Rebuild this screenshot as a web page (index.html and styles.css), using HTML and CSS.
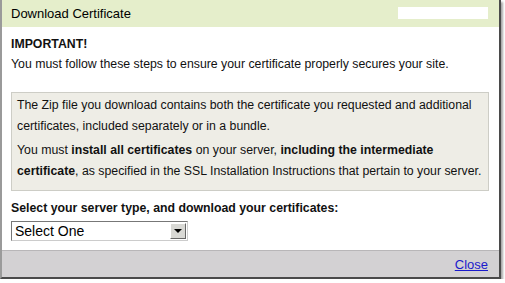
FILE: index.html
```html
<!DOCTYPE html>
<html lang="en">

    <head>
        <meta charset="UTF-8">
        <meta name="viewport" content="width=device-width, initial-scale=1.0">
        <title>Download Certificate</title>
        <link rel="stylesheet" href="styles.css">
    </head>

    <body>
        <div class="dialog">
            <div class="dialog-header">
                <span class="dialog-title">Download Certificate</span>
                <span class="header-field"></span>
            </div>
            <div class="dialog-body">
                <h3 class="important">IMPORTANT!</h3>
                <p class="intro">You must follow these steps to ensure your certificate properly secures your site.</p>
                <div class="note">
                    <p>The Zip file you download contains both the certificate you requested and additional certificates, included separately or in a bundle.</p>
                    <p>You must <b>install all certificates</b> on your server, <b>including the intermediate</b>
                        <b>certificate</b>, as specified in the SSL Installation Instructions that pertain to your server.</p>
                </div>
                <label class="server-label" for="serverType">Select your server type, and download your certificates:</label>
                <div class="select-box">
                    <select id="serverType" name="serverType">
                        <option>Select One</option>
                    </select>
                    <span class="select-arrow"></span>
                </div>
            </div>
            <div class="dialog-footer">
                <a href="#" class="close-link">Close</a>
            </div>
        </div>
    </body>

</html>
```

FILE: styles.css
```css
body {
    font-family: "Liberation Sans", Arial, sans-serif;
    font-size: 12.3px;
    color: #111;
    background-color: #fff;
    margin: 0;
}

.dialog {
    width: 497px;
    height: 277px;
    display: flex;
    flex-direction: column;
    border-left: 2px solid #9a9a9a;
    border-right: 2px solid #4a4a4a;
    border-bottom: 2px solid #4a4a4a;
    box-shadow: 2px 2px 2px rgba(0, 0, 0, 0.35);
}

.dialog-header {
    height: 27px;
    display: flex;
    align-items: center;
    justify-content: space-between;
    padding: 0 11px 0 9px;
    background-color: #e5eecb;
}

.dialog-title {
    font-size: 13px;
    color: #000;
}

.header-field {
    width: 90px;
    height: 12px;
    margin-bottom: 1px;
    background-color: #fff;
}

.dialog-body {
    flex: 1;
    padding: 9px 10px 0 9px;
}

.important {
    margin: 0;
    font-size: 12.3px;
    line-height: 17px;
}

.intro {
    margin: 1px 0 0;
    line-height: 20px;
}

.note {
    margin-top: 18px;
    padding: 2px 0 8px 5px;
    background-color: #eeede6;
    border: 1px solid #cdcdc6;
}

.note p {
    margin: 0 0 3px;
    line-height: 21px;
}

.note p:last-child {
    margin-bottom: 0;
}

.server-label {
    display: block;
    margin-top: 9px;
    font-weight: bold;
    line-height: 16px;
}

.select-box {
    display: flex;
    width: 177px;
    height: 20px;
    margin-top: 5px;
    box-sizing: border-box;
    border: 1px solid #777;
    border-right-color: #ccc;
    border-bottom-color: #ccc;
    background-color: #fff;
}

.select-box select {
    flex: 1;
    appearance: none;
    -webkit-appearance: none;
    border: none;
    outline: none;
    background: transparent;
    padding: 0 0 0 3px;
    font-family: "Liberation Sans", Arial, sans-serif;
    font-size: 14px;
    color: #000;
}

.select-arrow {
    width: 14px;
    margin: 1px;
    background-color: #d8d8d4;
    border: 1px solid #fff;
    border-right-color: #666;
    border-bottom-color: #666;
    display: flex;
    align-items: center;
    justify-content: center;
}

.select-arrow::after {
    content: "";
    border-left: 4px solid transparent;
    border-right: 4px solid transparent;
    border-top: 4px solid #000;
}

.dialog-footer {
    height: 26px;
    display: flex;
    align-items: center;
    justify-content: flex-end;
    padding-right: 11px;
    background-color: #d3d1d3;
    border-top: 1px solid #b8b6b8;
}

.close-link {
    font-size: 13px;
    color: #1a1acc;
}
```
